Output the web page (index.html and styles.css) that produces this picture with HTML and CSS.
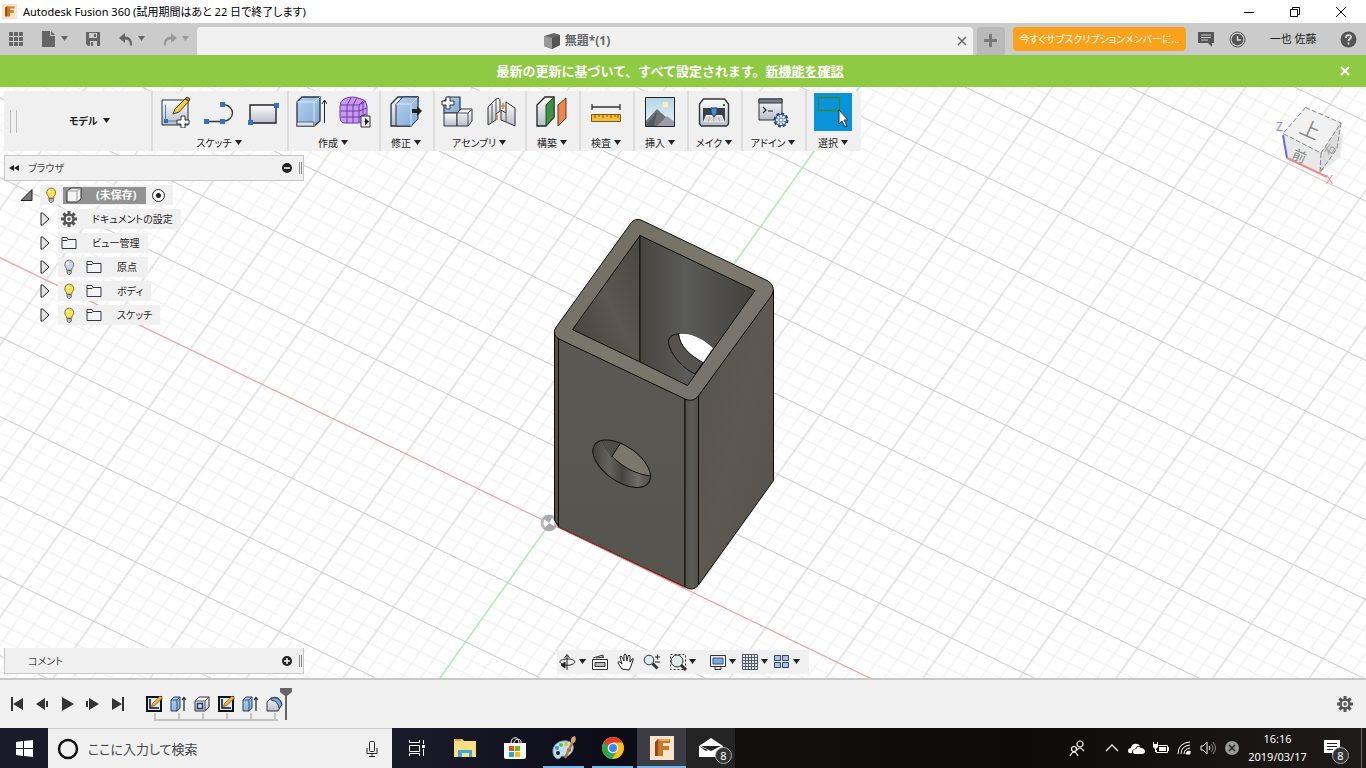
FILE: index.html
```html
<!DOCTYPE html>
<html lang="ja">
<head>
    <meta charset="UTF-8">
    <meta name="viewport" content="width=device-width, initial-scale=1.0">
    <title>Autodesk Fusion 360</title>
    <link rel="stylesheet" href="styles.css">
</head>
<body>
    <!-- shared icons -->
    <svg class="defs" aria-hidden="true">
        <defs>
            <linearGradient id="gBlue" x1="0" y1="0" x2="1" y2="1"><stop offset="0" stop-color="#b9d3ee"/><stop offset="1" stop-color="#7fa9d6"/></linearGradient>
            <linearGradient id="gGray" x1="0" y1="0" x2="0" y2="1"><stop offset="0" stop-color="#fdfdfe"/><stop offset="1" stop-color="#b9bdc8"/></linearGradient>
            <linearGradient id="gSky" x1="0" y1="0" x2="0" y2="1"><stop offset="0" stop-color="#b4d3e6"/><stop offset="1" stop-color="#edf5f8"/></linearGradient>
        </defs>
        <symbol id="caret" viewBox="0 0 7 6"><path d="M0 0h7L3.500 5z" fill="currentColor"/></symbol>
        <symbol id="bulb" viewBox="0 0 12 16"><path d="M6 1a4.700 4.700 0 0 1 3 8.300V11H3.400V9.300A4.700 4.700 0 0 1 6 1z" fill="currentColor" stroke="#8d7b3c"/><circle cx="4.600" cy="4.500" r="1.500" fill="#fff" opacity=".8"/><path d="M4 11.500h4.400V14L7 15.500H5.400L4 14z" fill="#a9b6be" stroke="#555f66" stroke-width=".8"/></symbol>
        <symbol id="folder" viewBox="0 0 16 14"><path d="M1 12.500V1.500h5l1 2h8v9z" fill="#f3f5f8" stroke="#34393f"/><path d="M1 4.500h5l1-1" fill="none" stroke="#34393f"/></symbol>
        <symbol id="arrow" viewBox="0 0 10 14"><path d="M1 1l1.500 0 6.500 6-6.500 6H1z" fill="#e4e4e4" stroke="#222"/></symbol>
        <symbol id="gear" viewBox="0 0 16 16"><g fill="currentColor"><circle cx="8" cy="8" r="5.600"/><path d="M6.500 0h3v16h-3z"/><path d="M6.500 0h3v16h-3z" transform="rotate(45 8 8)"/><path d="M6.500 0h3v16h-3z" transform="rotate(90 8 8)"/><path d="M6.500 0h3v16h-3z" transform="rotate(135 8 8)"/></g><circle cx="8" cy="8" r="3.300" fill="#f0f0f0"/><circle cx="8" cy="8" r="1.700" fill="currentColor"/></symbol>
        <symbol id="fSketch" viewBox="0 0 18 18"><path d="M2 2h14v14H2z" fill="#dbe9f8" stroke="#111" stroke-width="2"/><path d="M5 4v9h9" fill="none" stroke="#111" stroke-width="1.500"/><path d="M6.500 11.500l1-3L15 1l2.500 2L10 10.500z" fill="#f3b62c" stroke="#6b4b12" stroke-width=".7"/></symbol>
        <symbol id="fExtrude" viewBox="0 0 18 18"><path d="M2 5l3-3h6v11l-3 3H2z" fill="url(#gBlue)" stroke="#27405f"/><path d="M2 5h6v11M8 5l3-3" fill="none" stroke="#27405f" stroke-width=".8"/><path d="M15 16V3M13 5l2-2.500L17 5" fill="none" stroke="#222" stroke-width="1.200"/></symbol>
        <symbol id="logoF" viewBox="0 0 24 24"><path d="M0 0h24v24H0z" fill="#fbe3cb"/><path d="M8 3h12v4h-7v3h6v4h-6v6H8z" fill="#c9782a"/><path d="M8 3L5 6v14l3 0z" fill="#8d4a15"/><path d="M8 3h12l-2 2h-7z" fill="#eea75b"/></symbol>
    </svg>

    <header class="titlebar">
        <svg class="app-icon" viewBox="0 0 24 24"><use href="#logoF"/></svg>
        <span class="title">Autodesk Fusion 360 (試用期間はあと 22 日で終了します)</span>
        <div class="window-buttons">
            <button aria-label="最小化"><svg width="12" height="12"><path d="M1 6.500h10" stroke="#000"/></svg></button>
            <button aria-label="元に戻す"><svg width="12" height="12" fill="none" stroke="#000"><path d="M1.500 3.500h7v7h-7zM3.500 3.500v-2h7v7h-2"/></svg></button>
            <button aria-label="閉じる"><svg width="12" height="12" stroke="#000"><path d="M1 1l10 10M11 1L1 11"/></svg></button>
        </div>
    </header>

    <div class="tabbar">
        <div class="quick">
            <button aria-label="データパネル"><svg width="15" height="15" fill="#666"><path d="M0 0h4v4H0zM5 0h4v4H5zM10 0h4v4h-4zM0 5h4v4H0zM5 5h4v4H5zM10 5h4v4h-4zM0 10h4v4H0zM5 10h4v4H5zM10 10h4v4h-4z"/></svg></button>
            <button aria-label="ファイル"><svg width="14" height="16" fill="#666"><path d="M0 0h8v5h5v11H0zM9 0l4 4H9z"/></svg><svg class="caret" width="7" height="6"><use href="#caret"/></svg></button>
            <button aria-label="保存"><svg width="15" height="15"><path d="M0 0h14v14H2l-2-2z" fill="#666"/><path d="M3 1h8v5H3zM4 9h7v5H4z" fill="#cbcbcb"/><path d="M8 2h2v3H8zM5 10h2v4H5z" fill="#666"/></svg></button>
            <button aria-label="元に戻す"><svg width="14" height="13" fill="#666"><path d="M0 5l6-5v3.500c5 0 7.500 3.500 7 9h-2c0-4-1.500-6-5-6V10z"/></svg><svg class="caret" width="7" height="6"><use href="#caret"/></svg></button>
            <button class="dim" aria-label="やり直し"><svg width="14" height="13" fill="#999"><path d="M14 5L8 0v3.500c-5 0-7.500 3.500-7 9h2c0-4 1.500-6 5-6V10z"/></svg><svg class="caret" width="7" height="6"><use href="#caret"/></svg></button>
        </div>
        <div class="doc-tab">
            <div class="doc-name">
                <svg width="17" height="16"><path d="M0 3l10-3 6 2v10l-8 4-8-3z" fill="#666"/><path d="M0 3l8 2v11l-8-3z" fill="#999"/><path d="M8 5l8-3v10l-8 4z" fill="#555"/></svg>
                <span>無題*(1)</span>
            </div>
            <button aria-label="タブを閉じる"><svg width="10" height="10" stroke="#666" stroke-width="1.500"><path d="M1 1l8 8M9 1L1 9"/></svg></button>
        </div>
        <button class="new-tab" aria-label="新規"><svg width="14" height="14" fill="#777"><path d="M5 0h3v5h5v3H8v5H5V8H0V5h5z"/></svg></button>
        <button class="subscribe">今すぐサブスクリプションメンバーに...</button>
        <div class="account">
            <button aria-label="コメント"><svg width="16" height="16"><path d="M0 1h16v11h-2v4l-4-4H0z" fill="#555"/><path d="M3 4h10M3 6.500h10M3 9h7" stroke="#ccc"/></svg></button>
            <button aria-label="ジョブ状況"><svg width="17" height="17" fill="none"><circle cx="8.500" cy="8.500" r="7.500" stroke="#555"/><circle cx="8.500" cy="8.500" r="5.800" fill="#555"/><path d="M8.500 5v4h3.500" stroke="#ddd" stroke-width="1.300"/></svg></button>
            <button class="user">一也 佐藤</button>
            <button aria-label="ヘルプ"><svg width="17" height="17"><circle cx="8.500" cy="8.500" r="8" fill="#555"/><path d="M6 7c0-4 5-3.500 5-1 0 2-2.500 2-2.500 4M8.500 11.500v2" fill="none" stroke="#ddd" stroke-width="1.800"/></svg></button>
        </div>
    </div>

    <div class="banner">
        <p>最新の更新に基づいて、すべて設定されます。<a href="#news">新機能を確認</a></p>
        <button aria-label="閉じる"><svg width="10" height="10" stroke="#fff" stroke-width="2"><path d="M1 1l8 8M9 1L1 9"/></svg></button>
    </div>

    <main class="viewport">
        <svg class="scene" viewBox="0 87 1366 591" preserveAspectRatio="xMidYMid slice">
            <defs>
                <!-- one major cell, 5 x 5 minor cells -->
                <pattern id="grid" x="-50" y="-50" width="100" height="100" patternUnits="userSpaceOnUse" patternTransform="matrix(.719 .348 -.421 .593 549.700 523.300)">
                    <path d="M0 10h100M0 30h100M0 70h100M0 90h100M10 0v100M30 0v100M70 0v100M90 0v100" stroke="#ececec" stroke-width="1.300"/>
                    <path d="M0 50h100M50 0v100" stroke="#c8c8c8" stroke-width="1.200"/>
                </pattern>
                <linearGradient id="rim" x1="0" y1="0" x2="1" y2="1"><stop offset="0" stop-color="#6d6960"/><stop offset=".5" stop-color="#7d786d"/><stop offset="1" stop-color="#75716a"/></linearGradient>
                <linearGradient id="front" x1="0" y1="0" x2="0" y2="1"><stop offset="0" stop-color="#5a5953"/><stop offset="1" stop-color="#55544e"/></linearGradient>
                <linearGradient id="side" x1="0" y1="0" x2="1" y2="1"><stop offset="0" stop-color="#56544d"/><stop offset=".5" stop-color="#5d5850"/><stop offset="1" stop-color="#55534d"/></linearGradient>
                <linearGradient id="back" x1="0" y1="0" x2="1" y2="0"><stop offset="0" stop-color="#45443f"/><stop offset=".4" stop-color="#5b5b57"/><stop offset="1" stop-color="#42413c"/></linearGradient>
                <linearGradient id="left" x1="0" y1="1" x2="1" y2="0"><stop offset="0" stop-color="#454039"/><stop offset=".5" stop-color="#5b564e"/><stop offset="1" stop-color="#4a4740"/></linearGradient>
                <linearGradient id="corner" x1="0" y1="0" x2="1" y2="0"><stop offset="0" stop-color="#4e4d48"/><stop offset=".5" stop-color="#5f5d56"/><stop offset="1" stop-color="#504e48"/></linearGradient>
                <linearGradient id="bore" x1="0" y1="0" x2="1" y2="0"><stop offset="0" stop-color="#3b3a36"/><stop offset=".3" stop-color="#65635d"/><stop offset=".5" stop-color="#44433e"/><stop offset=".75" stop-color="#6f6d67"/><stop offset="1" stop-color="#454440"/></linearGradient>
                <clipPath id="hole"><ellipse cx="621.700" cy="463.700" rx="33" ry="17.500" transform="rotate(35 621.700 463.700)"/></clipPath>
            </defs>
            <rect y="87" width="1366" height="591" fill="#fff"/>
            <rect y="87" width="1366" height="591" fill="url(#grid)"/>
            <path d="M0 258l870 420" stroke="#f99"/>
            <path d="M440 678L860 87" stroke="#8f8"/>

            <!-- origin marker -->
            <circle cx="549" cy="523" r="7" fill="#fff" stroke="#b9b9b9" stroke-width="3"/>
            <path d="M549 523l7 4a8 8 0 0 1-12 2zM549 523l-6-5a8 8 0 0 1 10-2z" fill="#aaa"/>

            <!-- body -->
            <g stroke="#0c0c0b" stroke-linejoin="round">
                <path d="M554.500 332V520l4.500 7.500V338z" fill="#504f49"/>
                <path d="M558.500 337L685 398V587L558.500 527z" fill="url(#front)"/>
                <path d="M698.500 396L773.500 290V480.500L698.500 585z" fill="url(#side)"/>
                <path d="M685 398V587q8 5 13.500-2V396z" fill="url(#corner)"/>
                <path d="M555.500 328L631 223q4-5 10-3l127 61q8 5 4 14L699 395q-5 8-14 4L559 339q-7-4-3.500-11z" fill="url(#rim)"/>
                <path d="M640 235.500V362l-67.500-32.500z" fill="url(#left)"/>
                <path d="M640 235.500L755 290.500 687.500 385.500 640 362z" fill="url(#back)"/>
                <path d="M713 348c-10-9-23-15-34-14-9 0-13 6-9 14 4 10 13 20 25 26z" fill="#55534d"/>
                <path d="M679 334c11-2 25 5 34 14l-10 14.500c-13-7-23-16-24-28.500z" fill="#fff" stroke="none"/>
                <path d="M703 362.500c-13-7-23-16-24.500-28.500" fill="none"/>
            </g>
            <g clip-path="url(#hole)">
                <path d="M590 438h64v52h-64z" fill="url(#bore)"/>
                <path d="M602 436c0 14 22 38 50 40v-38z" fill="#7c776c" stroke="#111"/>
                <path d="M602 436c0 8 4 15 10 21l8-13v-8z" fill="#4f4d47"/>
                <path d="M611.500 457l9-14" stroke="#111"/>
            </g>
            <ellipse cx="621.700" cy="463.700" rx="33" ry="17.500" transform="rotate(35 621.700 463.700)" fill="none" stroke="#111"/>
            <path d="M558.500 527L686 588" stroke="#a33"/>

            <!-- view cube -->
            <g class="cube">
                <path d="M1287 157l33 16 20-16 3-22-12-10z" fill="#ddd" opacity=".7"/>
                <path d="M1305.500 107.500l35.500 15.500-20 30-38-19.500z" fill="#f1f1f1"/>
                <path d="M1283 133.500l38 19.500-1 19.500-33-15z" fill="#e8e8e8"/>
                <path d="M1341 123l-20 30-1 19.500 17-24z" fill="#dcdcdc"/>
                <path d="M1305.500 107.500l35.500 15.500-20 30-38-19.500zM1321 153l-1 19.500 17-24 4-25.500" fill="none" stroke="#888" stroke-dasharray="5 2"/>
                <path d="M1283 135l4 23" stroke="#66e" stroke-width="2"/>
                <path d="M1287 158l40 19" stroke="#f08a8a" stroke-width="2"/>
                <text x="1300" y="137" font-size="20" fill="#888" transform="rotate(24 1310 130)">上</text>
                <text x="1291" y="158" font-size="14" fill="#888" transform="rotate(24 1291 158)">前</text>
                <text x="1324" y="155" font-size="11" fill="#999" transform="rotate(-55 1328 150)">右</text>
                <text x="1276" y="131" font-size="12" fill="#88f">Z</text>
                <text x="1326" y="184" font-size="12" fill="#f88">X</text>
            </g>
        </svg>

        <div class="overlay">
            <div class="toolbar">
                <div class="workspace">
                    <button>モデル<svg class="caret" width="7" height="6"><use href="#caret"/></svg></button>
                </div>
                <div class="group">
                    <div class="icons">
                        <button aria-label="スケッチを作成"><svg width="32" height="32"><path d="M3 4h26v25H3z" fill="url(#gGray)" stroke="#2b3038"/><path d="M6.500 9v16H18" fill="none" stroke="#4a7fc0"/><path d="M5 23h4v4H5z" fill="#2d6bc0"/><path d="M14 18l2-5L26 3l4 2-10 11z" fill="#f4cf45" stroke="#3f3a25"/><path d="M26 3l2-2 3 2-1 2z" fill="#c98e6c" stroke="#3f3a25"/><path d="M22 20h4v4h4v4h-4v4h-4v-4h-4v-4h4z" fill="#fff" stroke="#333"/></svg></button>
                        <button aria-label="線分"><svg width="32" height="32"><path d="M3 25.500h16c14 0 14-17 0-17" fill="none" stroke="#333" stroke-width="1.300"/><path d="M1 23h5v5H1zM17 23h5v5h-5zM17 6h5v5h-5z" fill="#3672c4"/></svg></button>
                        <button aria-label="長方形"><svg width="32" height="32"><path d="M3 9h26v18H3z" fill="url(#gGray)" stroke="#222" stroke-width="1.400"/><path d="M1 24h5v5H1zM27 7h5v5h-5z" fill="#3672c4"/></svg></button>
                    </div>
                    <button class="label">スケッチ<svg class="caret" width="7" height="6"><use href="#caret"/></svg></button>
                </div>
                <div class="group">
                    <div class="icons">
                        <button aria-label="押し出し"><svg width="32" height="32"><path d="M2 6l5-5h18v24l-6 5H2z" fill="url(#gBlue)" stroke="#23344c" stroke-width="1.300"/><path d="M2 6h17v24M19 6l6-5" fill="none" stroke="#dceafa"/><path d="M2 26h17v4H2z" fill="#dfe3ea" stroke="#667"/><path d="M29.500 27V5M27 8l2.500-4L32 8" fill="none" stroke="#222"/></svg></button>
                        <button aria-label="フォーム"><svg width="32" height="32"><path d="M5 3q8-4 17 0 5 1 6 7v10q-2 7-9 7H6q-5 0-5-6V10q0-5 4-7z" fill="#c79af0" stroke="#6b3aa6"/><path d="M2 9h18l7-4M2 15h18l8-3M2 21h18l7-3M8 27V9l4-7M14 27V9l4-7M20 27V9l5-5M24 24V6" fill="none" stroke="#6b3aa6"/><path d="M22 20h9v11h-9z" fill="#eee" stroke="#333"/><path d="M23 25.500h3V22l4 3.500-4 4V26z" fill="#222"/></svg></button>
                    </div>
                    <button class="label">作成<svg class="caret" width="7" height="6"><use href="#caret"/></svg></button>
                </div>
                <div class="group">
                    <div class="icons">
                        <button aria-label="プレス/プル"><svg width="32" height="32"><path d="M1 8l7-7h20l-1 22-6 7H1z" fill="url(#gGray)" stroke="#23344c" stroke-width="1.300"/><path d="M6 8l7-7h15v22l-7 7H6z" fill="url(#gBlue)" stroke="#23344c"/><path d="M6 8h15v22M21 8l7-7" fill="none" stroke="#d5e5f7"/><path d="M22 13h5v-3l5 5-5 5v-3h-5z" fill="#222"/></svg></button>
                    </div>
                    <button class="label">修正<svg class="caret" width="7" height="6"><use href="#caret"/></svg></button>
                </div>
                <div class="group">
                    <div class="icons">
                        <button aria-label="新規コンポーネント"><svg width="32" height="32"><path d="M3 17V5l4-4h12v16z" fill="url(#gBlue)" stroke="#23344c" stroke-width="1.200"/><path d="M3 17h13v13H3z" fill="url(#gGray)" stroke="#333"/><path d="M16 17l4-4h11v12l-4 5H16z" fill="url(#gGray)" stroke="#333"/><path d="M16 17h11v13M27 17l4-4" fill="none" stroke="#555"/><path d="M5 1h4v4h4v4H9v4H5V9H1V5h4z" fill="#fff" stroke="#333"/></svg></button>
                        <button aria-label="ジョイント"><svg width="32" height="32"><path d="M3 11l8-8q4-2 4 2v10l-4 3v6l-8 5z" fill="url(#gGray)" stroke="#333"/><path d="M7 8v18" stroke="#555"/><path d="M11 3v15" stroke="#555"/><path d="M30 12l-9-6v11l-5-3v10l5 2 9 4z" fill="url(#gGray)" stroke="#333"/><path d="M21 17v9" stroke="#555"/><path d="M12 19v5M18 7v6M16 10h5" stroke="#e57b20" stroke-width="1.500"/></svg></button>
                    </div>
                    <button class="label">アセンブリ<svg class="caret" width="7" height="6"><use href="#caret"/></svg></button>
                </div>
                <div class="group">
                    <div class="icons">
                        <button aria-label="オフセット平面"><svg width="32" height="32"><path d="M1 9l8-8h9v20l-8 9H1z" fill="url(#gGray)" stroke="#222" stroke-width="1.300"/><path d="M10 9l8-8v20l-8 9z" fill="#3f8f46" stroke="#1e4f25"/><path d="M22 9l8-7v20l-8 8z" fill="#e88750" stroke="#6e3216"/></svg></button>
                    </div>
                    <button class="label">構築<svg class="caret" width="7" height="6"><use href="#caret"/></svg></button>
                </div>
                <div class="group">
                    <div class="icons">
                        <button aria-label="計測"><svg width="32" height="32"><path d="M2 11h28M2 8v6M30 8v6" stroke="#333" stroke-width="1.300"/><path d="M1.500 18.500h29v7h-29z" fill="#f4bd3a" stroke="#7b5716"/><path d="M5 19v3M9 19v2M13 19v3M17 19v2M21 19v3M25 19v2M28 19v3" stroke="#7b5716"/></svg></button>
                    </div>
                    <button class="label">検査<svg class="caret" width="7" height="6"><use href="#caret"/></svg></button>
                </div>
                <div class="group">
                    <div class="icons">
                        <button aria-label="イメージ"><svg width="32" height="32"><path d="M1.500 1.500h29v29h-29z" fill="url(#gSky)"/><path d="M19 6h5v5h-5z" fill="#fff2ab"/><path d="M2 25l11-12 11 10v7H2z" fill="#6d7078"/><path d="M13 30l10-10 8 6v4z" fill="#9c9fa8"/><path d="M2 30l11-14-3 14z" fill="#55585f"/><path d="M1.500 1.500h29v29h-29z" fill="none" stroke="#222"/></svg></button>
                    </div>
                    <button class="label">挿入<svg class="caret" width="7" height="6"><use href="#caret"/></svg></button>
                </div>
                <div class="group">
                    <div class="icons">
                        <button aria-label="3D プリント"><svg width="32" height="32"><path d="M1.500 8l4-5h21l4 5v20l-2 2h-25l-2-2z" fill="url(#gGray)" stroke="#333" stroke-width="1.400"/><path d="M5 12h22v14H5z" fill="#3b3e45"/><path d="M8 19h16l3 7H5z" fill="#eee"/><path d="M8 22h17M7 24h19M12 20l-2 6M16 20v6M20 20l2 6" stroke="#999" stroke-width=".6"/><path d="M13 12h6v5l-3 4-3-4z" fill="#4b8ad2" stroke="#1d3e6b"/><path d="M25 8h2v2h-2z" fill="#297d2d"/></svg></button>
                    </div>
                    <button class="label">メイク<svg class="caret" width="7" height="6"><use href="#caret"/></svg></button>
                </div>
                <div class="group addins">
                    <div class="icons">
                        <button aria-label="スクリプトとアドイン"><svg width="32" height="32"><path d="M2 3h23v21H2z" fill="url(#gGray)" stroke="#333"/><path d="M2 3h23v4H2z" fill="#7b818d" stroke="#333"/><path d="M6 11l3 3-3 3M11 15h5" fill="none" stroke="#222" stroke-width="1.200"/><g fill="#6b8fc2" stroke="#2c4670" stroke-width=".7"><circle cx="24" cy="24" r="6.500" stroke-width="2" stroke-dasharray="3 2"/><circle cx="24" cy="24" r="5.500"/><path d="M24 19v10M19 24h10M20.500 20.500l7 7M27.500 20.500l-7 7" stroke="#fff" stroke-width="1.500"/><circle cx="24" cy="24" r="2" fill="#fff"/></g></svg></button>
                    </div>
                    <button class="label">アドイン<svg class="caret" width="7" height="6"><use href="#caret"/></svg></button>
                </div>
                <div class="group select">
                    <div class="icons">
                        <button class="active" aria-label="選択"><svg width="38" height="38"><path d="M4.500 4.500h21v13h-21z" fill="none" stroke="#2c8a3a" stroke-width="1.300"/><path d="M25 17v14l3-3 3 6 2-1-3-6h4z" fill="#fff" stroke="#333"/></svg></button>
                    </div>
                    <button class="label">選択<svg class="caret" width="7" height="6"><use href="#caret"/></svg></button>
                </div>
            </div>

            <section class="panel">
                <svg class="collapse" width="12" height="8" fill="#222"><path d="M0 4l5-3v6zM5 4l5-3v6z"/></svg>
                <h2>ブラウザ</h2>
                <button aria-label="折りたたむ"><svg width="10" height="10"><circle cx="5" cy="5" r="5" fill="#222"/><path d="M2 5h6" stroke="#fff" stroke-width="1.500"/></svg></button>
                <span class="grip"></span>
            </section>

            <ul class="tree">
                <li class="root">
                    <svg width="13" height="14"><path d="M1 12.500L12 1.500v11z" fill="#777" stroke="#222"/></svg>
                    <div class="node">
                        <svg class="bulb on" width="12" height="16"><use href="#bulb"/></svg>
                        <span class="doc"><svg width="16" height="16"><path d="M1 4l4-3h10v11l-4 3H1z" fill="#f4f4f4" stroke="#333"/><path d="M1 4h10v11M11 4l4-3" fill="none" stroke="#999"/></svg>(未保存)</span>
                        <input type="radio" checked aria-label="アクティブにする">
                    </div>
                </li>
                <li>
                    <svg width="10" height="14"><use href="#arrow"/></svg>
                    <div class="node"><svg class="cog" width="16" height="16"><use href="#gear"/></svg><span>ドキュメントの設定</span></div>
                </li>
                <li>
                    <svg width="10" height="14"><use href="#arrow"/></svg>
                    <div class="node"><svg width="16" height="14"><use href="#folder"/></svg><span>ビュー管理</span></div>
                </li>
                <li>
                    <svg width="10" height="14"><use href="#arrow"/></svg>
                    <div class="node"><svg class="bulb" width="12" height="16"><use href="#bulb"/></svg><svg width="16" height="14"><use href="#folder"/></svg><span>原点</span></div>
                </li>
                <li>
                    <svg width="10" height="14"><use href="#arrow"/></svg>
                    <div class="node"><svg class="bulb on" width="12" height="16"><use href="#bulb"/></svg><svg width="16" height="14"><use href="#folder"/></svg><span>ボディ</span></div>
                </li>
                <li>
                    <svg width="10" height="14"><use href="#arrow"/></svg>
                    <div class="node"><svg class="bulb on" width="12" height="16"><use href="#bulb"/></svg><svg width="16" height="14"><use href="#folder"/></svg><span>スケッチ</span></div>
                </li>
            </ul>

            <section class="panel comments">
                <h2>コメント</h2>
                <button aria-label="展開"><svg width="10" height="10"><circle cx="5" cy="5" r="5" fill="#222"/><path d="M2 5h6M5 2v6" stroke="#fff" stroke-width="1.500"/></svg></button>
                <span class="grip"></span>
            </section>
        </div>

        <div class="navbar">
            <button class="menu" aria-label="オービット"><svg width="18" height="18" fill="none" stroke="#222"><path d="M8 17V3M5.500 5L8 1.500 10.500 5M3 11c-5-3 0-5 6-5s9 3 5 5-6 1-10 1"/><path d="M6 9l-4 3 4 3z" fill="#222"/></svg><svg class="caret" width="7" height="6"><use href="#caret"/></svg></button>
            <button aria-label="ビュー正面"><svg width="18" height="18"><path d="M1.500 6.500h15v10h-15z" fill="#fff" stroke="#333"/><path d="M4 9.500h10v4H4z" fill="#b9bcc6" stroke="#333"/><path d="M2 5l10-3v3M5 5l8-1" stroke="#333" fill="none"/></svg></button>
            <button aria-label="画面移動"><svg width="18" height="18"><path d="M5 16L1 10q0-2 2-1l2 2L3 4q1-2 2 0l2 4V2q1-2 2 0l1 6 1-5q1-2 2 0v6l2-3q2-1 1 1l-2 6-2 4z" fill="#fff" stroke="#222"/></svg></button>
            <button aria-label="ズーム"><svg width="18" height="18"><circle cx="6" cy="7" r="4.800" fill="#dcebf0" stroke="#333"/><path d="M9.500 10.500l5 5" stroke="#333" stroke-width="3"/><path d="M12 4h5M14.500 1.500v5M12 9h5" stroke="#222"/></svg></button>
            <button class="wide" aria-label="フィット"><svg width="18" height="18"><path d="M1.500 1.500h15v15h-15z" fill="none" stroke="#333" stroke-dasharray="2 2"/><circle cx="8" cy="8" r="6" fill="#dcebf0" stroke="#333"/><path d="M12 12l5 5" stroke="#333" stroke-width="3"/></svg><svg class="caret" width="7" height="6"><use href="#caret"/></svg></button>
            <button class="menu" aria-label="表示設定"><svg width="18" height="18"><path d="M1.500 2.500h15v11h-15z" fill="#eef" stroke="#333"/><path d="M4 5h10v6H4z" fill="#7fa6da" stroke="#35588b"/><path d="M6 14v2.500h6V14" fill="#ddd" stroke="#333"/></svg><svg class="caret" width="7" height="6"><use href="#caret"/></svg></button>
            <button class="menu" aria-label="グリッド"><svg width="18" height="18"><path d="M1.500 1.500h15v15h-15zM4.500 1v16M7.500 1v16M10.500 1v16M13.500 1v16M1 4.500h16M1 7.500h16M1 10.500h16M1 13.500h16" fill="#e8e8f0" stroke="#555a66"/></svg><svg class="caret" width="7" height="6"><use href="#caret"/></svg></button>
            <button class="menu" aria-label="ビューポート"><svg width="18" height="18" fill="#a9c4e8" stroke="#2c4670"><path d="M1.500 2.500h6v5h-6zM9.500 2.500h6v5h-6zM1.500 9.500h6v5h-6zM9.500 9.500h6v5h-6z"/></svg><svg class="caret" width="7" height="6"><use href="#caret"/></svg></button>
        </div>
    </main>

    <div class="timeline">
        <div class="playback">
            <button aria-label="最初"><svg width="13" height="14" fill="#333"><path d="M0 0h2v14H0zM2 7l10-6v12z"/></svg></button>
            <button aria-label="前へ"><svg width="13" height="14" fill="#333"><path d="M0 7l9-6v12zM10 4h2v6h-2z"/></svg></button>
            <button aria-label="再生"><svg width="13" height="14" fill="#333"><path d="M1 0l12 7-12 7z"/></svg></button>
            <button aria-label="次へ"><svg width="13" height="14" fill="#333"><path d="M0 4h2v6H0zM3 1l10 6-10 6z"/></svg></button>
            <button aria-label="最後"><svg width="13" height="14" fill="#333"><path d="M1 1l10 6-10 6zM11 0h2v14h-2z"/></svg></button>
        </div>
        <div class="features">
            <button aria-label="スケッチ1"><svg width="18" height="18"><use href="#fSketch"/></svg></button>
            <button aria-label="押し出し1"><svg width="18" height="18"><use href="#fExtrude"/></svg></button>
            <button aria-label="シェル1"><svg width="18" height="18"><path d="M2 6l4-4h10v10l-4 4H2z" fill="url(#gGray)" stroke="#333"/><path d="M2 6h10v10M12 6l4-4" fill="none" stroke="#555"/><path d="M4.500 8.500h5v5h-5z" fill="#cfe0f4" stroke="#1d3e6b" stroke-width="1.500"/></svg></button>
            <button aria-label="スケッチ2"><svg width="18" height="18"><use href="#fSketch"/></svg></button>
            <button aria-label="押し出し2"><svg width="18" height="18"><use href="#fExtrude"/></svg></button>
            <button aria-label="フィレット1"><svg width="18" height="18"><path d="M2 7l4-4q8-3 11 6l-4 7H2z" fill="url(#gGray)" stroke="#333"/><path d="M6 3q9-2 11 7l-3 3q-1-7-8-8z" fill="#7fa6da" stroke="#27405f"/></svg></button>
        </div>
        <svg class="marker" width="13" height="32" fill="#666"><path d="M0 0h12v4L7 8v24H5V8L0 4z"/></svg>
        <button class="settings" aria-label="設定"><svg width="16" height="16"><use href="#gear"/></svg></button>
    </div>

    <footer class="taskbar">
        <button class="start" aria-label="スタート"><svg width="17" height="17" fill="#fff"><path d="M0 2l7-1v7H0zM8 1l9-1v8H8zM0 9h7v7l-7-1zM8 9h9v8l-9-1z"/></svg></button>
        <label class="search">
            <svg width="22" height="22"><circle cx="11" cy="11" r="9" fill="none" stroke="#111" stroke-width="2.500"/></svg>
            <input type="text" placeholder="ここに入力して検索" aria-label="検索">
            <svg width="12" height="18" fill="none" stroke="#222"><rect x="3.500" y="1.500" width="5" height="10" rx="1"/><path d="M1 8v5.500h10V8M6 13.500V17M3 16.500h6"/></svg>
        </label>
        <button aria-label="タスクビュー"><svg width="18" height="16" fill="none" stroke="#fff"><path d="M1.500 0v2.500h10V0M1.500 5.500h10v6h-10zM1.500 16v-2.500h10V16M15.500 0v4M15.500 9v7"/><path d="M14 5h3v3h-3z" fill="#fff" stroke="none"/></svg></button>
        <button aria-label="エクスプローラー"><svg width="23" height="20"><path d="M0 1h8l2 2h12v16H0z" fill="#fbdf83"/><path d="M1 1h6v2H1z" fill="#e2a92f"/><path d="M4 12h14v7h-3v-4H8v4H4z" fill="#43a7dc"/></svg></button>
        <button aria-label="ストア"><svg width="24" height="24"><path d="M1 7h22v14q0 2-2 2H3q-2 0-2-2z" fill="#fff"/><path d="M8 7c0-7 8-7 8 0M11 7c0-5 8-5 7 0" fill="none" stroke="#fff"/><path d="M6 10h5v5H6z" fill="#e64b22"/><path d="M12 10h5v5h-5z" fill="#7cb900"/><path d="M6 16h5v5H6z" fill="#1fa4e8"/><path d="M12 16h5v5h-5z" fill="#fdb900"/></svg></button>
        <button class="running" aria-label="ペイント"><svg width="26" height="24"><path d="M2 17C1 9 8 4 16 5c8 1 8 10 2 14-3 3-7-1-9 3-2 2-6 0-7-5z" fill="#bfe0ef" stroke="#6c9fb8"/><circle cx="6" cy="12" r="2" fill="#4a90d9"/><circle cx="10" cy="9" r="2" fill="#65b54a"/><circle cx="15" cy="8" r="2" fill="#e7b933"/><circle cx="7" cy="17" r="2" fill="#222"/><circle cx="18" cy="14" r="2" fill="#d2452d"/><path d="M14 22L22 5" stroke="#b8783a" stroke-width="2.500"/><path d="M20 6q-1-5 4-6 2 4-1 7z" fill="#d9a66a"/></svg></button>
        <button class="running" aria-label="Chrome"><svg width="24" height="24" viewBox="0 0 24 24"><circle cx="12" cy="12" r="11" fill="#fbc116"/><path d="M12 12L2.500 6.500A11 11 0 0 1 21.500 6.500H12z" fill="#e33b2e"/><path d="M2.500 6.500A11 11 0 0 0 11 23l5.500-8.500H7.500z" fill="#30a350"/><path d="M2.500 6.500h9.500v5.500l-5 2z" fill="#e33b2e"/><path d="M2.500 6.500l5 8.500 2 1-1-6z" fill="#30a350"/><circle cx="12" cy="12" r="5.300" fill="#fff"/><circle cx="12" cy="12" r="4" fill="#4384f3"/></svg></button>
        <button class="running current" aria-label="Fusion 360"><svg width="24" height="24"><use href="#logoF"/></svg></button>
        <button class="mail" aria-label="メール"><svg width="24" height="20"><path d="M0 8l12-8 12 8v11H0z" fill="#fff"/><path d="M2 8h20l-10 5z" fill="#222"/><path d="M0 8l9 4-2 1z" fill="#222"/></svg><span class="badge">8</span></button>
        <div class="tray">
            <button class="people" aria-label="People"><svg width="16" height="16" fill="none" stroke="#fff" stroke-width="1.200"><circle cx="11" cy="4" r="3"/><path d="M8 10q3-4 6 0l1 1"/><circle cx="5" cy="9" r="2.500"/><path d="M1 16q4-8 8 0"/></svg></button>
            <button aria-label="隠れているインジケーター"><svg width="14" height="8" fill="none" stroke="#fff" stroke-width="1.300"><path d="M1 7l6-6 6 6"/></svg></button>
            <button aria-label="OneDrive"><svg width="17" height="12" fill="#fff"><path d="M0 9q0-3 3-3 1-5 6-4 2 0 3 2-3-1-5 3-3 0-3 4-4 1-4-2zM5 10q0-3 3-3 2-4 5-1 3 0 4 3 0 3-3 3H7q-2 0-2-2z"/></svg></button>
            <button aria-label="バッテリー"><svg width="17" height="13"><path d="M6.500 3.500h9v7h-11V8" fill="none" stroke="#fff"/><path d="M7 5h7v4H7zM16 5h1v4h-1zM1 2h5v3L4 7H3L1 5zM1 0h1v2H1zM5 0h1v2H5zM3 7h1v3H3z" fill="#fff"/></svg></button>
            <button aria-label="ネットワーク"><svg width="14" height="14" fill="none" stroke="#fff"><path d="M1 13Q1 2 13 1M4 13Q4 5 13 4M7 13q0-5 6-6"/><path d="M9 13q0-3 4-3v3z" fill="#fff"/></svg></button>
            <button aria-label="音量"><svg width="16" height="14" fill="none" stroke="#fff"><path d="M1 5h2l4-4v12L3 9H1zM9 5q2 2 0 4"/><path d="M11 3q4 4 0 8M13 1q5 6 0 12" stroke="#888"/></svg></button>
            <button aria-label="状態"><svg width="14" height="14"><circle cx="7" cy="7" r="7" fill="#999"/><path d="M4 4l6 6M10 4l-6 6" stroke="#222" stroke-width="1.500"/></svg></button>
            <time class="clock" datetime="2019-03-17T16:16"><span>16:16</span><span>2019/03/17</span></time>
            <button class="notice" aria-label="通知"><svg width="16" height="16"><path d="M0 0h16v13h-5l-3 3v-3H0z" fill="#fff"/><path d="M3 3.500h10M3 6.500h10M3 9.500h6" stroke="#222"/></svg><span class="badge">8</span></button>
        </div>
    </footer>
</body>
</html>
```

FILE: styles.css
```css
* {
    box-sizing: border-box;
}
body {
    margin: 0;
    height: 100vh;
    display: flex;
    flex-direction: column;
    overflow: hidden;
    font-family: "Noto Sans", "Noto Sans CJK JP", sans-serif;
    font-feature-settings: "palt";
    font-size: 11px;
    line-height: 16px;
    color: #222;
    background-color: #f0f0f0;
}
button {
    display: flex;
    align-items: center;
    justify-content: center;
    padding: 0;
    border: none;
    background: none;
    font: inherit;
    font-feature-settings: inherit;
    color: inherit;
    cursor: pointer;
}
svg {
    display: block;
    flex: none;
}
.defs {
    position: absolute;
    width: 0;
    height: 0;
}
.caret {
    margin-left: 5px;
}

/* title bar */
.titlebar {
    display: flex;
    align-items: center;
    height: 23px;
    padding-left: 2px;
    background-color: #fff;
    color: #000;
}
.app-icon {
    width: 15px;
    height: 15px;
    margin-right: 6px;
}
.window-buttons {
    display: flex;
    margin-left: auto;
    padding-right: 2px;
}
.window-buttons button {
    width: 46px;
    height: 22px;
}

/* tabs */
.tabbar {
    display: flex;
    align-items: center;
    height: 32px;
    background-color: #cbcbcb;
}
.quick {
    display: flex;
    align-items: center;
    gap: 18px;
    width: 197px;
    padding-left: 9px;
    color: #666;
}
.quick .dim {
    color: #999;
}
.doc-tab {
    flex: 1;
    display: flex;
    align-items: center;
    align-self: flex-end;
    height: 28px;
    padding-right: 6px;
    background-color: #f1f1f1;
    border-radius: 4px 4px 0 0;
}
.doc-name {
    flex: 1;
    display: flex;
    align-items: center;
    justify-content: center;
    gap: 4px;
    font-size: 12px;
    font-weight: bold;
    color: #666;
}
.new-tab {
    align-self: flex-end;
    width: 28px;
    height: 28px;
    margin: 0 8px 0 4px;
    background-color: #b9b9b9;
    border-radius: 4px 4px 0 0;
}
.subscribe {
    width: 173px;
    height: 24px;
    background-color: #faa21b;
    border-radius: 4px;
    font-size: 10px;
    color: #fff;
    white-space: nowrap;
}
.account {
    display: flex;
    align-items: center;
    justify-content: space-between;
    width: 180px;
    padding: 0 9px 0 12px;
}
.account .user {
    padding: 0 8px;
}

/* banner */
.banner {
    display: flex;
    align-items: center;
    height: 32px;
    padding: 0 16px 0 0;
    background-color: #8fca45;
    color: #fff;
}
.banner p {
    flex: 1;
    margin: 0;
    font-size: 13px;
    font-feature-settings: normal;
    font-weight: bold;
    text-align: center;
}
.banner a {
    color: #fff;
}

/* canvas */
.viewport {
    position: relative;
    flex: 1;
    min-height: 0;
}
.scene {
    position: absolute;
    inset: 0;
    width: 100%;
    height: 100%;
}
.overlay {
    position: relative;
    display: flex;
    flex-direction: column;
    align-items: flex-start;
    height: 100%;
    padding: 4px;
    font-size: 10px;
}

/* toolbar */
.toolbar {
    display: flex;
    height: 60px;
    margin-bottom: 4px;
    background-color: #f0f0f0;
}
.workspace {
    display: flex;
    align-items: center;
    gap: 52px;
    width: 147px;
    padding-left: 6px;
    font-weight: bold;
}
.workspace::before {
    content: "";
    width: 5px;
    height: 23px;
    border: solid #bbb;
    border-width: 0 1px;
}
.group {
    display: flex;
    flex-direction: column;
    align-items: center;
    justify-content: space-between;
    min-width: 54px;
    padding: 5px 8px 0 6px;
    border-left: 2px solid #ddd;
}
.icons {
    display: flex;
    gap: 12px;
    height: 32px;
}
.label .caret {
    margin-left: 3px;
}
.addins {
    min-width: 64px;
}
.select {
    min-width: 56px;
}
.active {
    width: 38px;
    height: 38px;
    background-color: #0a93d8;
    align-self: center;
}

/* side panels */
.panel {
    display: flex;
    align-items: center;
    width: 300px;
    height: 26px;
    padding-left: 4px;
    background-color: #f0f0f0;
    border: 1px solid #c8c8c8;
}
.panel h2 {
    margin: 0 auto 0 7px;
    font-size: 10px;
    font-weight: normal;
    color: #444;
}
.grip {
    width: 3px;
    height: 12px;
    margin: 0 1px 0 7px;
    border: solid #888;
    border-width: 0 1px;
}
.comments {
    margin-top: auto;
    padding-left: 16px;
    border-top: none;
}

/* browser tree */
.tree {
    display: flex;
    flex-direction: column;
    gap: 4px;
    margin: 4px 0 0;
    padding: 0;
    list-style: none;
}
.tree li {
    display: flex;
    align-items: center;
    gap: 8px;
    padding-left: 36px;
}
.tree .root {
    gap: 7px;
    padding-left: 16px;
}
.node {
    display: flex;
    align-items: center;
    gap: 11px;
    min-width: 90px;
    height: 20px;
    padding: 0 8px 0 3px;
    background-color: #f0f0f0;
}
.tree li:not(.root) .node > span {
    padding-left: 4px;
}
.root .node {
    gap: 6px;
}
.bulb {
    color: #c3d5f6;
    margin-left: 2px;
}
.bulb.on {
    color: #ffe14d;
}
.cog {
    color: #555;
}
.doc {
    display: flex;
    align-items: center;
    gap: 14px;
    height: 17px;
    padding: 0 10px 0 3px;
    background-color: #929292;
    font-size: 11px;
    font-weight: bold;
    color: #fff;
}
.node input {
    appearance: none;
    width: 13px;
    height: 13px;
    margin: 0;
    border: 1px solid #222;
    border-radius: 50%;
    background: radial-gradient(#222 0 2px, #fff 3px);
}

/* view tools */
.navbar {
    position: absolute;
    bottom: 4px;
    left: 50%;
    transform: translateX(-50%);
    display: flex;
    align-items: center;
    gap: 8px;
    width: 252px;
    height: 24px;
    padding-left: 2px;
    background-color: #f0f0f0;
}
.navbar .caret {
    margin-left: 2px;
}
.navbar .menu {
    margin-right: -3px;
}
.navbar .wide {
    margin-right: 5px;
}

/* timeline */
.timeline {
    display: flex;
    align-items: center;
    height: 50px;
    border-top: 2px solid #c8c8c8;
    background-color: #f0f0f0;
}
.playback {
    display: flex;
    padding-left: 5px;
    margin-right: 12px;
}
.playback button {
    width: 25px;
    height: 24px;
}
.features {
    display: flex;
}
.features button {
    position: relative;
    width: 24px;
    height: 24px;
}
/* bracket under the features */
.features button::after {
    content: "";
    position: absolute;
    left: 12px;
    bottom: -5px;
    width: 24px;
    height: 6px;
    border: solid #c3c3c3;
    border-width: 0 0 2px 2px;
}
.features button:last-child::after {
    width: 2px;
}
.marker {
    margin-left: -6px;
}
.settings {
    margin: 0 13px 0 auto;
    color: #555;
}

/* taskbar */
.taskbar {
    display: flex;
    height: 40px;
    background: linear-gradient(90deg, #1b1a2b, #1b1a2b 30%, #0b0c16 45%, #120f0c 55%, #0d0b0a 75%, #1e1b19);
    color: #fff;
}
.taskbar > button {
    position: relative;
    width: 49px;
}
.taskbar > .start {
    width: 48px;
}
.search {
    display: flex;
    align-items: center;
    gap: 9px;
    width: 344px;
    padding: 0 14px 0 9px;
    background-color: #f0f0f0;
    border-top: 1px solid #c8c8c8;
}
.search input {
    flex: 1;
    min-width: 0;
    padding: 0;
    border: none;
    background: none;
    font: inherit;
    font-feature-settings: inherit;
    font-size: 13px;
}
.search input::placeholder {
    color: #444;
}
.running::after {
    content: "";
    position: absolute;
    left: 4px;
    right: 4px;
    bottom: 0;
    height: 2px;
    background-color: #76b9ed;
}
.current {
    background-color: #3c3c44;
}
.current::after {
    left: 0;
    right: 0;
}
.mail {
    background-color: #242425;
}
.badge {
    position: absolute;
    right: 3px;
    bottom: 4px;
    width: 17px;
    height: 17px;
    border: 1px solid #aaa;
    border-radius: 50%;
    background-color: #333;
    font-size: 11px;
    line-height: 15px;
    text-align: center;
}
.tray {
    display: flex;
    margin-left: auto;
    padding-right: 4px;
}
.tray button {
    width: 24px;
}
.tray .people {
    margin-right: 11px;
}
.clock {
    display: flex;
    flex-direction: column;
    align-items: center;
    justify-content: center;
    width: 67px;
    line-height: 18px;
}
.tray .notice {
    position: relative;
    width: 51px;
    padding-right: 8px;
    border-right: 1px solid #666;
}
.notice .badge {
    right: 12px;
}
```
